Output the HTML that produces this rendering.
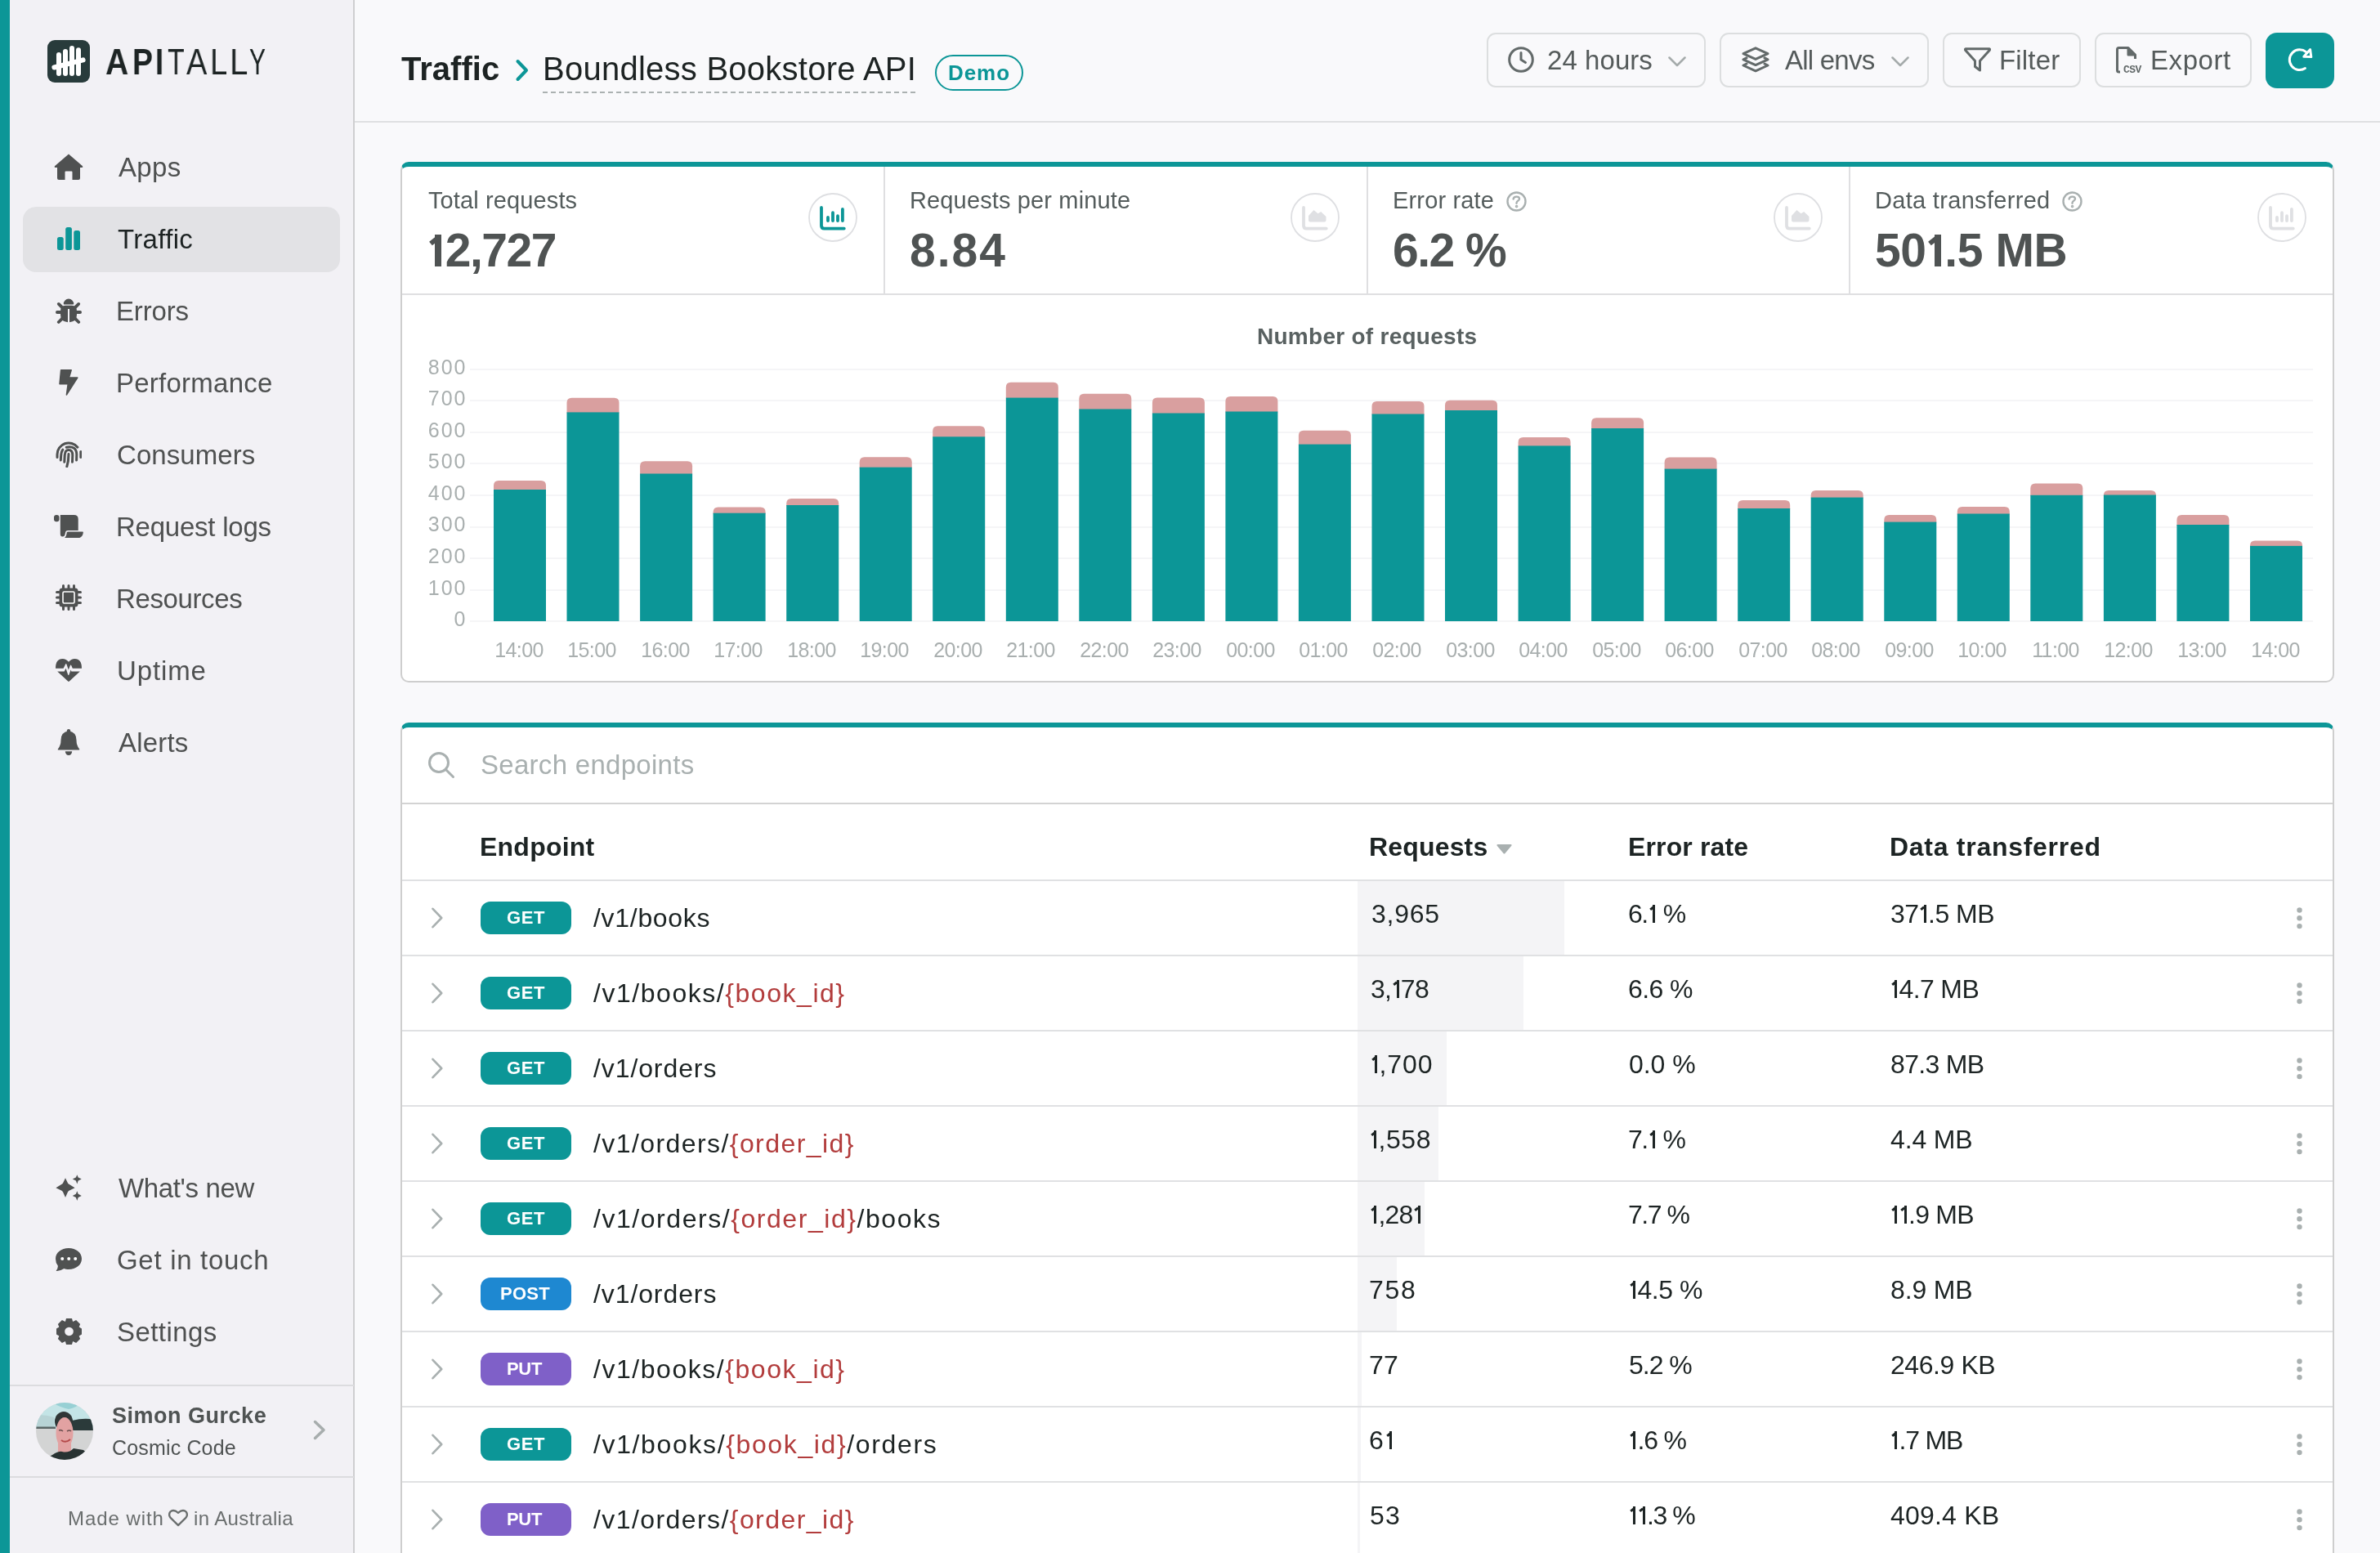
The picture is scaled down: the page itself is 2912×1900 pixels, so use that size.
<!DOCTYPE html>
<html><head><meta charset="utf-8">
<style>
*{box-sizing:border-box;margin:0;padding:0}
html,body{width:2912px;height:1900px;overflow:hidden;background:#f9f9fb;font-family:"Liberation Sans",sans-serif;color:#212626;-webkit-font-smoothing:antialiased}
.a{position:absolute}
.t{position:absolute;white-space:pre;line-height:1;will-change:transform}
#lbar{left:0;top:0;width:12px;height:1900px;background:#0c9697}
#side{left:12px;top:0;width:422px;height:1900px;background:#f2f1f5;border-right:2px solid #cfcfd1}
#hdrline{left:434px;top:148px;width:2478px;height:2px;background:#dfe0e2}
.card{position:absolute;background:#fff;border:2px solid #cecece;border-top:6px solid #0c9697;border-radius:10px}
.one{display:inline-block;position:relative;width:.36em;height:.688em;overflow:hidden;vertical-align:baseline}
.one i{color:transparent;font-style:normal}
.one::before{content:"";position:absolute;right:.07em;top:0;bottom:0;width:.095em;background:currentColor}
.one::after{content:"";position:absolute;right:.13em;top:.035em;width:.17em;height:.09em;background:currentColor;transform:rotate(-38deg);transform-origin:100% 50%}
.b .one{width:.4em}
.b .one::before{width:.14em;right:.08em}
.b .one::after{width:.17em;height:.11em;right:.18em;top:.03em}
</style></head>
<body>
<div id="lbar" class="a"></div>
<div id="side" class="a"></div>
<div id="hdrline" class="a"></div>

<!-- SIDEBAR -->
<svg class="a" style="left:58px;top:49px" width="52" height="52" viewBox="0 0 52 52">
<rect width="52" height="52" rx="9" fill="#283b3b"/>
<g stroke="#fff" stroke-width="6" stroke-linecap="round">
<line x1="14" y1="18" x2="14" y2="41"/><line x1="22" y1="14" x2="22" y2="41"/><line x1="30" y1="10" x2="30" y2="41"/><line x1="38" y1="12.3" x2="38" y2="41"/>
<line x1="8.4" y1="33.5" x2="43.6" y2="24.4"/></g></svg>
<div class="t" style="left:128.5px;top:54px;font-size:44px;font-weight:700;color:#1d2424;transform-origin:0 0;transform:scaleX(0.887)">A</div>
<div class="t" style="left:161.6px;top:54px;font-size:44px;font-weight:700;color:#1d2424;transform-origin:0 0;transform:scaleX(0.848)">P</div>
<div class="t" style="left:190.4px;top:54px;font-size:44px;font-weight:700;color:#1d2424;transform-origin:0 0;transform:scaleX(0.829)">I</div>
<div class="t" style="left:205.2px;top:54px;font-size:44px;font-weight:400;color:#1d2424;transform-origin:0 0;transform:scaleX(0.772)">T</div>
<div class="t" style="left:227.5px;top:54px;font-size:44px;font-weight:400;color:#1d2424;transform-origin:0 0;transform:scaleX(0.864)">A</div>
<div class="t" style="left:256.5px;top:54px;font-size:44px;font-weight:400;color:#1d2424;transform-origin:0 0;transform:scaleX(0.868)">L</div>
<div class="t" style="left:280.7px;top:54px;font-size:44px;font-weight:400;color:#1d2424;transform-origin:0 0;transform:scaleX(0.916)">L</div>
<div class="t" style="left:305.3px;top:54px;font-size:44px;font-weight:400;color:#1d2424;transform-origin:0 0;transform:scaleX(0.681)">Y</div>

<div class="a" style="left:28px;top:253px;width:388px;height:80px;border-radius:16px;background:#e2e2e5"></div>

<!-- icons -->
<svg class="a" style="left:66px;top:188px" width="36" height="32" viewBox="0 0 36 32" fill="#4f5151">
<path d="M18 0.5 L34.8 15 Q36.2 17 34 17 L2 17 Q-0.2 17 1.2 15 Z"/>
<path d="M4 15 H32 V30 Q32 32 30 32 H22.5 V22.5 Q22.5 21.5 21.5 21.5 H14.5 Q13.5 21.5 13.5 22.5 V32 H6 Q4 32 4 30 Z"/></svg>
<svg class="a" style="left:70px;top:278px" width="28" height="28" viewBox="0 0 28 28" fill="#0c9697">
<rect x="0" y="12" width="7.7" height="16" rx="2.5"/><rect x="10.2" y="0" width="7.7" height="28" rx="2.5"/><rect x="20.3" y="4" width="7.7" height="24" rx="2.5"/></svg>
<svg class="a" style="left:68px;top:364px" width="32" height="32" viewBox="0 0 32 32">
<g fill="#4f5151"><path d="M9.8 7.8 A6.2 6.2 0 0 1 22.2 7.8 Q22.2 8.4 21.6 8.4 H10.4 Q9.8 8.4 9.8 7.8Z"/>
<path d="M6 17 Q6 10 12 9.8 H20 Q26 10 26 17 V21 Q26 29.5 17 30.2 V14 H15 V30.2 Q6 29.5 6 21Z"/></g>
<g stroke="#4f5151" stroke-width="3.8" stroke-linecap="round">
<line x1="3.8" y1="7.9" x2="9" y2="13.2"/><line x1="28.2" y1="7.9" x2="23" y2="13.2"/>
<line x1="1.9" y1="18" x2="6.5" y2="18"/><line x1="30.1" y1="18" x2="25.5" y2="18"/>
<line x1="3.8" y1="30" x2="9" y2="24.8"/><line x1="28.2" y1="30" x2="23" y2="24.8"/></g></svg>
<svg class="a" style="left:72px;top:452px" width="24" height="32" viewBox="0 0 24 32" fill="#4f5151" stroke="#4f5151" stroke-width="1.5" stroke-linejoin="round">
<path d="M2.6 0.8 H15.2 L12.4 10 H22.8 L9.4 31 L11.2 17.8 H1 Z"/></svg>
<svg class="a" style="left:68px;top:540px" width="32" height="32" viewBox="0 0 32 32" fill="none" stroke="#4f5151" stroke-width="3" stroke-linecap="round">
<path d="M2 19.5 V16 A14 14 0 0 1 26.9 7.2"/><path d="M30.8 12.5 V19.5"/>
<path d="M6.3 23 L6.6 18 Q7 12.5 8.8 10.2"/><path d="M13.2 7.2 Q25.5 5 25.8 16 L25.6 23"/>
<path d="M10.8 25.2 L11.2 17 Q11.5 10.5 16 10.5 Q20.8 10.5 20.8 17 L20.5 25.2"/><path d="M16 15.5 L15.4 24 L13.8 30.8"/></svg>
<svg class="a" style="left:66px;top:630px" width="36" height="28" viewBox="0 0 36 28" fill="#4f5151">
<rect x="0" y="0" width="6.5" height="8.2" rx="3"/>
<path d="M7.8 0 H24.5 Q29.7 0 29.7 5 V19 H17 Q14.3 19 13.9 22 Q13.6 26.5 10.4 26.5 Q7.8 26.5 7.8 23 Z"/>
<path d="M15.8 21 Q16.2 20.5 17.5 20.5 H35.2 Q36 20.7 35.8 21.8 Q35 28.4 28.5 28.4 H12.5 Q15.4 26.5 15.8 21 Z"/></svg>
<svg class="a" style="left:68px;top:715px" width="32" height="32" viewBox="0 0 32 32" fill="#4f5151">
<rect x="4.5" y="4.5" width="23" height="23" rx="3.5"/>
<g stroke="#4f5151" stroke-width="3" stroke-linecap="round"><path d="M9.5 1.5V5 M16 1.5V5 M22.5 1.5V5 M9.5 27V30.5 M16 27V30.5 M22.5 27V30.5 M1.5 9.5H5 M1.5 16H5 M1.5 22.5H5 M27 9.5H30.5 M27 16H30.5 M27 22.5H30.5"/></g>
<rect x="9" y="9" width="14" height="14" rx="1.5" fill="none" stroke="#fff" stroke-width="1.6"/></svg>
<svg class="a" style="left:68px;top:806px" width="32" height="28" viewBox="0 0 32 28" fill="#4f5151">
<path d="M0 11.8 Q0 0 8.5 0 Q13 0 16 3.8 Q19 0 23.5 0 Q32 0 32 11.8 H20.8 L19.2 8 Q18.6 7 18 8 L15.8 13.6 L13.4 6.6 Q12.8 5.6 12.2 6.6 L9.6 11.8 Z"/>
<path d="M2.2 15.5 H10.6 L12.6 11.8 L15.2 19.6 Q15.8 20.6 16.4 19.6 L18.6 13.5 L19.4 15.5 H29.8 L16.8 27.6 Q16 28.3 15.2 27.6 Z"/></svg>
<svg class="a" style="left:70px;top:892px" width="28" height="32" viewBox="0 0 28 32" fill="#4f5151">
<circle cx="14" cy="2.2" r="2.2"/>
<path d="M14 2.5 Q4.5 3.5 4.5 13.5 Q4.5 20 1 24.2 Q0 25.6 1.6 25.6 H26.4 Q28 25.6 27 24.2 Q23.5 20 23.5 13.5 Q23.5 3.5 14 2.5 Z"/>
<path d="M9.8 27.2 H18.2 Q17.8 32 14 32 Q10.2 32 9.8 27.2 Z"/></svg>
<svg class="a" style="left:68px;top:1437px" width="32" height="32" viewBox="0 0 32 32" fill="#4f5151">
<path d="M12 4.2 L15 10.5 Q15.5 11.4 16.4 11.8 L23.6 16.2 L16.4 19.8 Q15.5 20.4 15 21.2 L12 28 L9 21.2 Q8.5 20.4 7.6 19.8 L0.4 16.2 L7.6 11.8 Q8.5 11.4 9 10.5 Z"/>
<path d="M26.3 0.2 L27.7 3.6 L31.8 5.6 L27.7 7.6 L26.3 11.6 L24.9 7.6 L20.8 5.6 L24.9 3.6 Z"/>
<path d="M26.3 20.2 L27.7 23.8 L31.8 26 L27.7 28 L26.3 32 L24.9 28 L20.8 26 L24.9 23.8 Z"/></svg>
<svg class="a" style="left:68px;top:1527px" width="32" height="28" viewBox="0 0 32 28">
<path fill="#4f5151" d="M16 0 C25 0 32 5.5 32 13 C32 20.5 25 26 16 26 C13.8 26 12 25.6 10.4 25 Q5.5 28.2 0.6 28 Q3.2 24.6 2.8 21.4 Q0 18 0 13 C0 5.5 7 0 16 0Z"/>
<g fill="#fff"><circle cx="8.2" cy="13" r="2"/><circle cx="16.2" cy="13" r="2"/><circle cx="24.2" cy="13" r="2"/></g></svg>
<svg class="a" style="left:68.5px;top:1613px" width="31" height="32" viewBox="-15.5 -16 31 32">
<path fill="#4f5151" fill-rule="evenodd" d="M-3.5 -16 H3.5 L4.6 -12 L8.6 -14 L13.6 -9 L12.2 -5.6 L15.5 -3.5 V3.5 L12.2 5.6 L13.6 9 L8.6 14 L4.6 12 L3.5 16 H-3.5 L-4.6 12 L-8.6 14 L-13.6 9 L-12.2 5.6 L-15.5 3.5 V-3.5 L-12.2 -5.6 L-13.6 -9 L-8.6 -14 L-4.6 -12 Z M0 -5.3 A5.3 5.3 0 1 0 0.01 -5.3 Z"/></svg>

<div class="t" id="nv0" style="left:145.0px;top:188.2px;font-size:33px;color:#4f5151;letter-spacing:0.33px">Apps</div>
<div class="t" id="nv1" style="left:144.0px;top:275.8px;font-size:33px;color:#1d2323;letter-spacing:0.33px">Traffic</div>
<div class="t" id="nv2" style="left:142.0px;top:363.9px;font-size:33px;color:#4f5151;letter-spacing:-0.16px">Errors</div>
<div class="t" id="nv3" style="left:142.0px;top:452.0px;font-size:33px;color:#4f5151;letter-spacing:0.25px">Performance</div>
<div class="t" id="nv4" style="left:143.0px;top:540.1px;font-size:33px;color:#4f5151;letter-spacing:0.06px">Consumers</div>
<div class="t" id="nv5" style="left:142.0px;top:628.1px;font-size:33px;color:#4f5151;letter-spacing:-0.23px">Request logs</div>
<div class="t" id="nv6" style="left:142.0px;top:716.2px;font-size:33px;color:#4f5151;letter-spacing:-0.38px">Resources</div>
<div class="t" id="nv7" style="left:143.0px;top:804.2px;font-size:33px;color:#4f5151;letter-spacing:0.88px">Uptime</div>
<div class="t" id="nv8" style="left:145.0px;top:892.3px;font-size:33px;color:#4f5151;letter-spacing:0.2px">Alerts</div>
<div class="t" id="nv9" style="left:145.0px;top:1437.0px;font-size:33px;color:#4f5151;letter-spacing:-0.36px">What's new</div>
<div class="t" id="nv10" style="left:143.0px;top:1525.0px;font-size:33px;color:#4f5151;letter-spacing:0.7px">Get in touch</div>
<div class="t" id="nv11" style="left:143.0px;top:1613.1px;font-size:33px;color:#4f5151;letter-spacing:0.43px">Settings</div>

<div class="a" style="left:12px;top:1694px;width:421px;height:2px;background:#dcdcdf"></div>
<div class="a" style="left:12px;top:1806px;width:421px;height:2px;background:#dcdcdf"></div>
<svg class="a" style="left:44px;top:1716px" width="70" height="70" viewBox="0 0 70 70">
<defs><clipPath id="av"><circle cx="35" cy="35" r="35"/></clipPath></defs>
<g clip-path="url(#av)">
<rect width="70" height="70" fill="#d3d4d4"/>
<rect width="70" height="32" fill="#c3e4e6"/>
<path d="M20 0 H55 Q50 6 40 8 Q30 6 20 0Z" fill="#97d0d4"/>
<path d="M0 16 Q10 14 22 18 V30 H0Z" fill="#b7d3d5"/>
<rect x="0" y="29.5" width="24" height="2.5" fill="#5a6565"/>
<path d="M44 22 Q56 19 66 20 L70 22 V34 H44Z" fill="#2b3a3a"/>
<ellipse cx="34" cy="23" rx="11" ry="12" fill="#2f3636"/>
<rect x="27" y="46" width="16" height="16" fill="#e2a2a2"/>
<ellipse cx="35" cy="37" rx="10.5" ry="19" fill="#e2a2a2"/>
<path d="M28 34 Q31 33 33 35 M38 35 Q41 33 43 35" stroke="#6c5050" stroke-width="1.6" fill="none"/>
<path d="M31 46 Q36 50 42 45" stroke="#b44a4a" stroke-width="2" fill="none"/>
<path d="M10 70 L20 64 Q28 59 32 60 Q40 62 46 56 L58 58 Q66 64 70 70Z" fill="#283232"/>
</g></svg>
<div class="t" id="sg" style="left:137.4px;top:1718.7px;font-size:27px;font-weight:700;color:#4f5353;letter-spacing:0.51px">Simon Gurcke</div>
<div class="t" id="cc" style="left:137.4px;top:1758.7px;font-size:25px;color:#4f5353;letter-spacing:0.16px">Cosmic Code</div>
<svg class="a" style="left:383px;top:1737px" width="16" height="25" viewBox="0 0 16 25" fill="none" stroke="#a7adad" stroke-width="3.5" stroke-linecap="round" stroke-linejoin="round"><path d="M2.5 2.5 L13 12.5 L2.5 22.5"/></svg>
<div class="t" id="mw1" style="left:82.9px;top:1845.5px;font-size:24px;color:#6a6e6e;letter-spacing:0.94px">Made with</div>
<div class="t" id="mw2" style="left:237.4px;top:1845.5px;font-size:24px;color:#6a6e6e;letter-spacing:0.39px">in Australia</div>
<svg class="a" style="left:206px;top:1846px" width="24" height="22" viewBox="0 0 25 22" fill="none" stroke="#6a6e6e" stroke-width="2.4" stroke-linejoin="round"><path d="M12.5 20.5 L3 11.2 Q-0.5 7.2 2.5 3.2 Q6.5 -0.5 12.5 4.5 Q18.5 -0.5 22.5 3.2 Q25.5 7.2 22 11.2 Z"/></svg>

<!-- HEADER -->
<div class="t" id="h_traffic" style="left:491.1px;top:63.8px;font-size:40px;font-weight:700;color:#1d2323;letter-spacing:0.02px">Traffic</div>
<svg class="a" style="left:630px;top:72px" width="18" height="28" viewBox="0 0 18 28" fill="none" stroke="#0c9697" stroke-width="4" stroke-linecap="round" stroke-linejoin="round"><path d="M3.5 3 L14 14 L3.5 25"/></svg>
<div class="t" id="h_app" style="left:663.6px;top:63.8px;font-size:40px;color:#1d2323;letter-spacing:0.25px">Boundless Bookstore API</div>
<div class="a" style="left:664px;top:112px;width:456px;height:2px;background:repeating-linear-gradient(90deg,#abb1b1 0 6px,transparent 6px 10px)"></div>
<div class="a" style="left:1144px;top:67px;width:108px;height:44px;border:2px solid #0c9697;border-radius:22px"></div>
<div class="t" id="h_demo" style="left:1160.0px;top:75.7px;font-size:26px;font-weight:700;color:#0c9697;letter-spacing:0.93px">Demo</div>

<div class="a" style="left:1819px;top:40px;width:268px;height:67px;border:2px solid #dcdedf;border-radius:11px"></div>
<div class="a" style="left:2104px;top:40px;width:256px;height:67px;border:2px solid #dcdedf;border-radius:11px"></div>
<div class="a" style="left:2377px;top:40px;width:169px;height:67px;border:2px solid #dcdedf;border-radius:11px"></div>
<div class="a" style="left:2563px;top:40px;width:192px;height:67px;border:2px solid #dcdedf;border-radius:11px"></div>
<div class="a" style="left:2772px;top:40px;width:84px;height:68px;background:#0c9697;border-radius:14px"></div>
<svg class="a" style="left:1845px;top:57px" width="32" height="32" viewBox="0 0 32 32" fill="none" stroke="#636a6a" stroke-width="3" stroke-linecap="round"><circle cx="16" cy="16" r="14.3"/><path d="M16 7.5 V16 L21.5 19.5"/></svg>
<div class="t" id="b_24" style="left:1892.7px;top:57.0px;font-size:33px;color:#555b5b;letter-spacing:0.06px">24 hours</div>
<svg class="a" style="left:2041px;top:69px" width="22" height="13" viewBox="0 0 22 13" fill="none" stroke="#a5abab" stroke-width="2.5" stroke-linecap="round" stroke-linejoin="round"><path d="M1.5 1.5 L11 11 L20.5 1.5"/></svg>
<svg class="a" style="left:2131px;top:57px" width="34" height="32" viewBox="0 0 34 32" fill="none" stroke="#636a6a" stroke-width="3" stroke-linejoin="round" stroke-linecap="round"><path d="M17 1.8 L32 8.6 L17 15.4 L2 8.6 Z"/><path d="M6 13.8 L2 15.8 L17 22.6 L32 15.8 L28 13.8"/><path d="M6 21 L2 23 L17 29.8 L32 23 L28 21"/></svg>
<div class="t" id="b_env" style="left:2183.7px;top:57.0px;font-size:33px;color:#555b5b;letter-spacing:-0.77px">All envs</div>
<svg class="a" style="left:2314px;top:69px" width="22" height="13" viewBox="0 0 22 13" fill="none" stroke="#a5abab" stroke-width="2.5" stroke-linecap="round" stroke-linejoin="round"><path d="M1.5 1.5 L11 11 L20.5 1.5"/></svg>
<svg class="a" style="left:2403px;top:58px" width="33" height="30" viewBox="0 0 33 30" fill="none" stroke="#636a6a" stroke-width="3" stroke-linejoin="round" stroke-linecap="round"><path d="M1.8 1.8 H31.2 Q32 2.5 31 3.8 L19.5 16.5 V28 L13.5 23.5 V16.5 L2 3.8 Q1 2.5 1.8 1.8 Z"/></svg>
<div class="t" id="b_filter" style="left:2445.9px;top:57.0px;font-size:33px;color:#555b5b;letter-spacing:0.18px">Filter</div>
<svg class="a" style="left:2589px;top:57px;will-change:transform" width="33" height="33" viewBox="0 0 33 33" fill="none" stroke="#636a6a" stroke-width="3" stroke-linejoin="round"><path d="M5 31 H3.5 Q1.5 31 1.5 29 V3.5 Q1.5 1.5 3.5 1.5 H15 L23.5 10 V15"/><path d="M15 1.5 V10 H23.5" fill="#636a6a"/>
<text x="9" y="32" font-family="Liberation Mono" font-size="13" font-weight="700" fill="#636a6a" stroke="none" letter-spacing="-0.5">CSV</text></svg>
<div class="t" id="b_export" style="left:2631.4px;top:57.1px;font-size:33px;color:#555b5b;letter-spacing:0.56px">Export</div>
<svg class="a" style="left:2799px;top:58px" width="32" height="31" viewBox="0 0 32 31" fill="none" stroke="#fff" stroke-width="3" stroke-linecap="round" stroke-linejoin="round"><path d="M21.4 25.6 A12.4 12.4 0 1 1 22.6 5.6"/><path d="M27.6 2.6 L28.8 11.6 L19.8 11.2 Z"/></svg>

<!-- stats + chart card -->
<div class="card" style="left:490px;top:198px;width:2366px;height:637px"></div>
<div class="a" style="left:492px;top:359px;width:2362px;height:2px;background:#dfdfe1"></div>
<div class="a" style="left:1081px;top:204px;width:2px;height:155px;background:#dfdfe1"></div>
<div class="a" style="left:1672px;top:204px;width:2px;height:155px;background:#dfdfe1"></div>
<div class="a" style="left:2262px;top:204px;width:2px;height:155px;background:#dfdfe1"></div>

<div class="t" id="s_l1" style="left:524.0px;top:230.5px;font-size:29px;color:#545c5c;letter-spacing:0.12px">Total requests</div>
<div class="t" id="s_l2" style="left:1112.5px;top:230.5px;font-size:29px;color:#545c5c;letter-spacing:0.14px">Requests per minute</div>
<div class="t" id="s_l3" style="left:1703.9px;top:230.5px;font-size:29px;color:#545c5c;letter-spacing:0.16px">Error rate</div>
<div class="t" id="s_l4" style="left:2294.3px;top:230.5px;font-size:29px;color:#545c5c;letter-spacing:0.31px">Data transferred</div>
<div class="t b" id="s_v1" style="left:522.0px;top:278.3px;font-size:57px;font-weight:700;color:#4f5353;letter-spacing:-1.5px"><span class="one"><i>1</i></span>2,727</div>
<div class="t b" id="s_v2" style="left:1112.5px;top:278.3px;font-size:57px;font-weight:700;color:#4f5353;letter-spacing:1.97px">8.84</div>
<div class="t b" id="s_v3" style="left:1704.0px;top:278.3px;font-size:57px;font-weight:700;color:#4f5353;letter-spacing:-1.5px">6.2 %</div>
<div class="t b" id="s_v4" style="left:2294.0px;top:278.3px;font-size:57px;font-weight:700;color:#4f5353;letter-spacing:-0.43px">50<span class="one"><i>1</i></span>.5 MB</div>

<svg class="a" style="left:1843px;top:234px" width="25" height="25" viewBox="0 0 25 25" fill="none" stroke="#a9b0b0" stroke-width="2.4" stroke-linecap="round"><circle cx="12.5" cy="12.5" r="11"/><path d="M8.6 9.5 Q9 6.6 12.5 6.6 Q16 6.6 16 9.2 Q16 10.8 13.6 12.3 Q12.5 13 12.5 14.8"/><circle cx="12.6" cy="18.6" r="0.6" fill="#a9b0b0"/></svg>
<svg class="a" style="left:2523px;top:234px" width="25" height="25" viewBox="0 0 25 25" fill="none" stroke="#a9b0b0" stroke-width="2.4" stroke-linecap="round"><circle cx="12.5" cy="12.5" r="11"/><path d="M8.6 9.5 Q9 6.6 12.5 6.6 Q16 6.6 16 9.2 Q16 10.8 13.6 12.3 Q12.5 13 12.5 14.8"/><circle cx="12.6" cy="18.6" r="0.6" fill="#a9b0b0"/></svg>

<svg class="a" style="left:989px;top:236px" width="60" height="60" viewBox="0 0 60 60" fill="none" stroke-linecap="round">
<circle cx="30" cy="30" r="29" stroke="#dedfe2" stroke-width="1.8"/>
<path d="M16 18 V40 Q16 43.6 19.5 43.6 H43.8" stroke="#0c9697" stroke-width="3.8"/>
<path d="M24 30 V34 M30 24.2 V34 M36 28.2 V34 M41.9 20 V34" stroke="#0c9697" stroke-width="3.8"/></svg>
<svg class="a" style="left:1579px;top:236px" width="60" height="60" viewBox="0 0 60 60" fill="none" stroke-linecap="round">
<circle cx="30" cy="30" r="29" stroke="#dedfe2" stroke-width="1.8"/>
<path d="M16 18 V40 Q16 43.6 19.5 43.6 H43.8" stroke="#dfe0e3" stroke-width="3.8"/>
<path d="M22 28 L28.4 21 L33.6 25.3 L37.2 23 L43.5 29 V33.5 Q43.5 35.4 41.5 35.4 H24 Q22 35.4 22 33.5 Z" fill="#dfe0e3"/></svg>
<svg class="a" style="left:2170px;top:236px" width="60" height="60" viewBox="0 0 60 60" fill="none" stroke-linecap="round">
<circle cx="30" cy="30" r="29" stroke="#dedfe2" stroke-width="1.8"/>
<path d="M16 18 V40 Q16 43.6 19.5 43.6 H43.8" stroke="#dfe0e3" stroke-width="3.8"/>
<path d="M22 28 L28.4 21 L33.6 25.3 L37.2 23 L43.5 29 V33.5 Q43.5 35.4 41.5 35.4 H24 Q22 35.4 22 33.5 Z" fill="#dfe0e3"/></svg>
<svg class="a" style="left:2762px;top:236px" width="60" height="60" viewBox="0 0 60 60" fill="none" stroke-linecap="round">
<circle cx="30" cy="30" r="29" stroke="#dedfe2" stroke-width="1.8"/>
<path d="M16 18 V40 Q16 43.6 19.5 43.6 H43.8" stroke="#dfe0e3" stroke-width="3.8"/>
<path d="M24 30 V34 M30 24.2 V34 M36 28.2 V34 M41.9 20 V34" stroke="#dfe0e3" stroke-width="3.8"/></svg>
<!-- CHART -->
<div class="a" style="left:575px;top:759.1px;width:2255px;height:2px;background:#f5f5f7"></div>
<div class="a" style="left:575px;top:720.6px;width:2255px;height:2px;background:#f5f5f7"></div>
<div class="a" style="left:575px;top:682.0px;width:2255px;height:2px;background:#f5f5f7"></div>
<div class="a" style="left:575px;top:643.5px;width:2255px;height:2px;background:#f5f5f7"></div>
<div class="a" style="left:575px;top:604.9px;width:2255px;height:2px;background:#f5f5f7"></div>
<div class="a" style="left:575px;top:566.4px;width:2255px;height:2px;background:#f5f5f7"></div>
<div class="a" style="left:575px;top:527.9px;width:2255px;height:2px;background:#f5f5f7"></div>
<div class="a" style="left:575px;top:489.3px;width:2255px;height:2px;background:#f5f5f7"></div>
<div class="a" style="left:575px;top:450.8px;width:2255px;height:2px;background:#f5f5f7"></div>
<div class="t" style="left:468px;width:103.5px;text-align:right;top:745.0px;font-size:25px;color:#a9afaf;letter-spacing:2px">0</div>
<div class="t" style="left:468px;width:103.5px;text-align:right;top:706.5px;font-size:25px;color:#a9afaf;letter-spacing:2px">100</div>
<div class="t" style="left:468px;width:103.5px;text-align:right;top:668.0px;font-size:25px;color:#a9afaf;letter-spacing:2px">200</div>
<div class="t" style="left:468px;width:103.5px;text-align:right;top:629.4px;font-size:25px;color:#a9afaf;letter-spacing:2px">300</div>
<div class="t" style="left:468px;width:103.5px;text-align:right;top:590.9px;font-size:25px;color:#a9afaf;letter-spacing:2px">400</div>
<div class="t" style="left:468px;width:103.5px;text-align:right;top:552.3px;font-size:25px;color:#a9afaf;letter-spacing:2px">500</div>
<div class="t" style="left:468px;width:103.5px;text-align:right;top:513.8px;font-size:25px;color:#a9afaf;letter-spacing:2px">600</div>
<div class="t" style="left:468px;width:103.5px;text-align:right;top:475.3px;font-size:25px;color:#a9afaf;letter-spacing:2px">700</div>
<div class="t" style="left:468px;width:103.5px;text-align:right;top:436.7px;font-size:25px;color:#a9afaf;letter-spacing:2px">800</div>
<svg class="a" style="left:590px;top:440px" width="2250" height="330" viewBox="590 440 2250 330">
<path fill="#d99f9f" d="M604.0 600.0 V594.1 Q604.0 588.1 610.0 588.1 H662.0 Q668.0 588.1 668.0 594.1 V600.0 Z"/>
<rect fill="#0c9697" x="604.0" y="599.0" width="64" height="161.0"/>
<path fill="#d99f9f" d="M693.5 505.4 V492.7 Q693.5 486.7 699.5 486.7 H751.5 Q757.5 486.7 757.5 492.7 V505.4 Z"/>
<rect fill="#0c9697" x="693.5" y="504.4" width="64" height="255.6"/>
<path fill="#d99f9f" d="M783.1 580.5 V570.3 Q783.1 564.3 789.1 564.3 H841.1 Q847.1 564.3 847.1 570.3 V580.5 Z"/>
<rect fill="#0c9697" x="783.1" y="579.5" width="64" height="180.5"/>
<path fill="#d99f9f" d="M872.6 628.7 V626.6 Q872.6 620.6 878.6 620.6 H930.6 Q936.6 620.6 936.6 626.6 V628.7 Z"/>
<rect fill="#0c9697" x="872.6" y="627.7" width="64" height="132.3"/>
<path fill="#d99f9f" d="M962.2 619.0 V616.0 Q962.2 610.0 968.2 610.0 H1020.2 Q1026.2 610.0 1026.2 616.0 V619.0 Z"/>
<rect fill="#0c9697" x="962.2" y="618.0" width="64" height="142.0"/>
<path fill="#d99f9f" d="M1051.7 572.7 V565.2 Q1051.7 559.2 1057.7 559.2 H1109.7 Q1115.7 559.2 1115.7 565.2 V572.7 Z"/>
<rect fill="#0c9697" x="1051.7" y="571.7" width="64" height="188.3"/>
<path fill="#d99f9f" d="M1141.2 535.3 V527.2 Q1141.2 521.2 1147.2 521.2 H1199.2 Q1205.2 521.2 1205.2 527.2 V535.3 Z"/>
<rect fill="#0c9697" x="1141.2" y="534.3" width="64" height="225.7"/>
<path fill="#d99f9f" d="M1230.8 487.6 V473.7 Q1230.8 467.7 1236.8 467.7 H1288.8 Q1294.8 467.7 1294.8 473.7 V487.6 Z"/>
<rect fill="#0c9697" x="1230.8" y="486.6" width="64" height="273.4"/>
<path fill="#d99f9f" d="M1320.3 501.5 V487.8 Q1320.3 481.8 1326.3 481.8 H1378.3 Q1384.3 481.8 1384.3 487.8 V501.5 Z"/>
<rect fill="#0c9697" x="1320.3" y="500.5" width="64" height="259.5"/>
<path fill="#d99f9f" d="M1409.9 506.5 V492.4 Q1409.9 486.4 1415.9 486.4 H1467.9 Q1473.9 486.4 1473.9 492.4 V506.5 Z"/>
<rect fill="#0c9697" x="1409.9" y="505.5" width="64" height="254.5"/>
<path fill="#d99f9f" d="M1499.4 504.5 V490.9 Q1499.4 484.9 1505.4 484.9 H1557.4 Q1563.4 484.9 1563.4 490.9 V504.5 Z"/>
<rect fill="#0c9697" x="1499.4" y="503.5" width="64" height="256.5"/>
<path fill="#d99f9f" d="M1588.9 544.6 V532.7 Q1588.9 526.7 1594.9 526.7 H1646.9 Q1652.9 526.7 1652.9 532.7 V544.6 Z"/>
<rect fill="#0c9697" x="1588.9" y="543.6" width="64" height="216.4"/>
<path fill="#d99f9f" d="M1678.5 507.5 V496.9 Q1678.5 490.9 1684.5 490.9 H1736.5 Q1742.5 490.9 1742.5 496.9 V507.5 Z"/>
<rect fill="#0c9697" x="1678.5" y="506.5" width="64" height="253.5"/>
<path fill="#d99f9f" d="M1768.0 503.0 V495.7 Q1768.0 489.7 1774.0 489.7 H1826.0 Q1832.0 489.7 1832.0 495.7 V503.0 Z"/>
<rect fill="#0c9697" x="1768.0" y="502.0" width="64" height="258.0"/>
<path fill="#d99f9f" d="M1857.6 546.4 V541.0 Q1857.6 535.0 1863.6 535.0 H1915.6 Q1921.6 535.0 1921.6 541.0 V546.4 Z"/>
<rect fill="#0c9697" x="1857.6" y="545.4" width="64" height="214.6"/>
<path fill="#d99f9f" d="M1947.1 525.0 V517.3 Q1947.1 511.3 1953.1 511.3 H2005.1 Q2011.1 511.3 2011.1 517.3 V525.0 Z"/>
<rect fill="#0c9697" x="1947.1" y="524.0" width="64" height="236.0"/>
<path fill="#d99f9f" d="M2036.6 574.6 V565.5 Q2036.6 559.5 2042.6 559.5 H2094.6 Q2100.6 559.5 2100.6 565.5 V574.6 Z"/>
<rect fill="#0c9697" x="2036.6" y="573.6" width="64" height="186.4"/>
<path fill="#d99f9f" d="M2126.2 623.0 V617.9 Q2126.2 611.9 2132.2 611.9 H2184.2 Q2190.2 611.9 2190.2 617.9 V623.0 Z"/>
<rect fill="#0c9697" x="2126.2" y="622.0" width="64" height="138.0"/>
<path fill="#d99f9f" d="M2215.7 609.6 V606.1 Q2215.7 600.1 2221.7 600.1 H2273.7 Q2279.7 600.1 2279.7 606.1 V609.6 Z"/>
<rect fill="#0c9697" x="2215.7" y="608.6" width="64" height="151.4"/>
<path fill="#d99f9f" d="M2305.3 639.6 V636.0 Q2305.3 630.0 2311.3 630.0 H2363.3 Q2369.3 630.0 2369.3 636.0 V639.6 Z"/>
<rect fill="#0c9697" x="2305.3" y="638.6" width="64" height="121.4"/>
<path fill="#d99f9f" d="M2394.8 629.5 V626.0 Q2394.8 620.0 2400.8 620.0 H2452.8 Q2458.8 620.0 2458.8 626.0 V629.5 Z"/>
<rect fill="#0c9697" x="2394.8" y="628.5" width="64" height="131.5"/>
<path fill="#d99f9f" d="M2484.3 606.8 V597.6 Q2484.3 591.6 2490.3 591.6 H2542.3 Q2548.3 591.6 2548.3 597.6 V606.8 Z"/>
<rect fill="#0c9697" x="2484.3" y="605.8" width="64" height="154.2"/>
<path fill="#d99f9f" d="M2573.9 606.5 V606.1 Q2573.9 600.1 2579.9 600.1 H2631.9 Q2637.9 600.1 2637.9 606.1 V606.5 Z"/>
<rect fill="#0c9697" x="2573.9" y="605.5" width="64" height="154.5"/>
<path fill="#d99f9f" d="M2663.4 643.0 V636.0 Q2663.4 630.0 2669.4 630.0 H2721.4 Q2727.4 630.0 2727.4 636.0 V643.0 Z"/>
<rect fill="#0c9697" x="2663.4" y="642.0" width="64" height="118.0"/>
<path fill="#d99f9f" d="M2753.0 668.9 V667.6 Q2753.0 661.6 2759.0 661.6 H2811.0 Q2817.0 661.6 2817.0 667.6 V668.9 Z"/>
<rect fill="#0c9697" x="2753.0" y="667.9" width="64" height="92.1"/>
</svg>
<div class="t" style="left:574.5px;width:120px;text-align:center;top:783.0px;font-size:25px;color:#a9afaf;letter-spacing:-0.6px">14:00</div>
<div class="t" style="left:664.0px;width:120px;text-align:center;top:783.0px;font-size:25px;color:#a9afaf;letter-spacing:-0.6px">15:00</div>
<div class="t" style="left:753.6px;width:120px;text-align:center;top:783.0px;font-size:25px;color:#a9afaf;letter-spacing:-0.6px">16:00</div>
<div class="t" style="left:843.1px;width:120px;text-align:center;top:783.0px;font-size:25px;color:#a9afaf;letter-spacing:-0.6px">17:00</div>
<div class="t" style="left:932.7px;width:120px;text-align:center;top:783.0px;font-size:25px;color:#a9afaf;letter-spacing:-0.6px">18:00</div>
<div class="t" style="left:1022.2px;width:120px;text-align:center;top:783.0px;font-size:25px;color:#a9afaf;letter-spacing:-0.6px">19:00</div>
<div class="t" style="left:1111.7px;width:120px;text-align:center;top:783.0px;font-size:25px;color:#a9afaf;letter-spacing:-0.6px">20:00</div>
<div class="t" style="left:1201.3px;width:120px;text-align:center;top:783.0px;font-size:25px;color:#a9afaf;letter-spacing:-0.6px">21:00</div>
<div class="t" style="left:1290.8px;width:120px;text-align:center;top:783.0px;font-size:25px;color:#a9afaf;letter-spacing:-0.6px">22:00</div>
<div class="t" style="left:1380.4px;width:120px;text-align:center;top:783.0px;font-size:25px;color:#a9afaf;letter-spacing:-0.6px">23:00</div>
<div class="t" style="left:1469.9px;width:120px;text-align:center;top:783.0px;font-size:25px;color:#a9afaf;letter-spacing:-0.6px">00:00</div>
<div class="t" style="left:1559.4px;width:120px;text-align:center;top:783.0px;font-size:25px;color:#a9afaf;letter-spacing:-0.6px">01:00</div>
<div class="t" style="left:1649.0px;width:120px;text-align:center;top:783.0px;font-size:25px;color:#a9afaf;letter-spacing:-0.6px">02:00</div>
<div class="t" style="left:1738.5px;width:120px;text-align:center;top:783.0px;font-size:25px;color:#a9afaf;letter-spacing:-0.6px">03:00</div>
<div class="t" style="left:1828.1px;width:120px;text-align:center;top:783.0px;font-size:25px;color:#a9afaf;letter-spacing:-0.6px">04:00</div>
<div class="t" style="left:1917.6px;width:120px;text-align:center;top:783.0px;font-size:25px;color:#a9afaf;letter-spacing:-0.6px">05:00</div>
<div class="t" style="left:2007.1px;width:120px;text-align:center;top:783.0px;font-size:25px;color:#a9afaf;letter-spacing:-0.6px">06:00</div>
<div class="t" style="left:2096.7px;width:120px;text-align:center;top:783.0px;font-size:25px;color:#a9afaf;letter-spacing:-0.6px">07:00</div>
<div class="t" style="left:2186.2px;width:120px;text-align:center;top:783.0px;font-size:25px;color:#a9afaf;letter-spacing:-0.6px">08:00</div>
<div class="t" style="left:2275.8px;width:120px;text-align:center;top:783.0px;font-size:25px;color:#a9afaf;letter-spacing:-0.6px">09:00</div>
<div class="t" style="left:2365.3px;width:120px;text-align:center;top:783.0px;font-size:25px;color:#a9afaf;letter-spacing:-0.6px">10:00</div>
<div class="t" style="left:2454.8px;width:120px;text-align:center;top:783.0px;font-size:25px;color:#a9afaf;letter-spacing:-0.6px">11:00</div>
<div class="t" style="left:2544.4px;width:120px;text-align:center;top:783.0px;font-size:25px;color:#a9afaf;letter-spacing:-0.6px">12:00</div>
<div class="t" style="left:2633.9px;width:120px;text-align:center;top:783.0px;font-size:25px;color:#a9afaf;letter-spacing:-0.6px">13:00</div>
<div class="t" style="left:2723.5px;width:120px;text-align:center;top:783.0px;font-size:25px;color:#a9afaf;letter-spacing:-0.6px">14:00</div>
<div class="t" id="c_title" style="left:1537.7px;top:397.8px;font-size:28px;font-weight:700;color:#596161;letter-spacing:0.27px">Number of requests</div>

<!-- table card -->
<div class="card" style="left:490px;top:884px;width:2366px;height:1100px"></div>

<!-- TABLE -->
<svg class="a" style="left:523px;top:919px" width="34" height="34" viewBox="0 0 34 34" fill="none" stroke="#a9b0b0" stroke-width="3" stroke-linecap="round"><circle cx="14" cy="14" r="11.5"/><path d="M22.5 22.5 L31.5 31.5"/></svg>
<div class="t" id="srch" style="left:587.5px;top:919.2px;font-size:33px;color:#a9b0b0;letter-spacing:0.29px">Search endpoints</div>
<div class="a" style="left:492px;top:982px;width:2362px;height:2px;background:#d3d3d3"></div>
<div class="t" id="th1" style="left:587.0px;top:1020.1px;font-size:32px;font-weight:700;color:#1d2424;letter-spacing:0.23px">Endpoint</div>
<div class="t" id="th2" style="left:1675.0px;top:1020.1px;font-size:32px;font-weight:700;color:#1d2424;letter-spacing:0.17px">Requests</div>
<div class="t" id="th3" style="left:1991.6px;top:1020.1px;font-size:32px;font-weight:700;color:#1d2424;letter-spacing:0.13px">Error rate</div>
<div class="t" id="th4" style="left:2311.6px;top:1020.1px;font-size:32px;font-weight:700;color:#1d2424;letter-spacing:0.72px">Data transferred</div>
<svg class="a" style="left:1830px;top:1032px" width="21" height="14" viewBox="0 0 21 14"><path d="M1.5 2.5 Q0.8 1 2.5 1 H18.5 Q20.2 1 19.5 2.5 L11.5 12 Q10.5 13.2 9.5 12 Z" fill="#a9b0b0"/></svg>
<div class="a" style="left:492px;top:1076px;width:2362px;height:2px;background:#e0e1e3"></div>
<div class="a" style="left:1661px;top:1078px;width:253.0px;height:90px;background:#f4f4f6"></div>
<div class="a" style="left:492px;top:1168px;width:2362px;height:2px;background:#e0e1e3"></div>
<svg class="a" style="left:527px;top:1110px" width="16" height="26" viewBox="0 0 16 26" fill="none" stroke="#a9b0b0" stroke-width="2.6" stroke-linecap="round" stroke-linejoin="round"><path d="M2.5 1.8 L13.2 13 L2.5 24.2"/></svg>
<div class="a" style="left:588px;top:1103px;width:111px;height:40px;border-radius:12px;background:#0c9697"></div>
<div class="t" id="bd0" style="left:620.0px;top:1111.7px;font-size:22px;font-weight:700;color:#fff;letter-spacing:0.6px">GET</div>
<div class="t" id="pa0" style="left:725.6px;top:1106.8px;font-size:32px;color:#1d2424;letter-spacing:0.7px">/v1/books</div>
<div class="t" id="c0r0" style="left:1677.5px;top:1101.6px;font-size:32px;color:#1d2424;letter-spacing:0.72px">3,965</div>
<div class="t" id="c1r0" style="left:1992.0px;top:1101.6px;font-size:32px;color:#1d2424;letter-spacing:-1.45px">6.<span class="one"><i>1</i></span> %</div>
<div class="t" id="c2r0" style="left:2313.0px;top:1101.6px;font-size:32px;color:#1d2424;letter-spacing:-0.53px">37<span class="one"><i>1</i></span>.5 MB</div>
<svg class="a" style="left:2809px;top:1109px" width="9" height="29" viewBox="0 0 9 29" fill="#a9b0b0"><circle cx="4.5" cy="4.5" r="3.2"/><circle cx="4.5" cy="14.3" r="3.2"/><circle cx="4.5" cy="24.1" r="3.2"/></svg>
<div class="a" style="left:1661px;top:1170px;width:202.8px;height:90px;background:#f4f4f6"></div>
<div class="a" style="left:492px;top:1260px;width:2362px;height:2px;background:#e0e1e3"></div>
<svg class="a" style="left:527px;top:1202px" width="16" height="26" viewBox="0 0 16 26" fill="none" stroke="#a9b0b0" stroke-width="2.6" stroke-linecap="round" stroke-linejoin="round"><path d="M2.5 1.8 L13.2 13 L2.5 24.2"/></svg>
<div class="a" style="left:588px;top:1195px;width:111px;height:40px;border-radius:12px;background:#0c9697"></div>
<div class="t" id="bd1" style="left:620.0px;top:1203.7px;font-size:22px;font-weight:700;color:#fff;letter-spacing:0.6px">GET</div>
<div class="t" id="pa1" style="left:725.6px;top:1198.8px;font-size:32px;color:#1d2424;letter-spacing:1.54px">/v1/books/<span style="color:#b23c3c">{book_id}</span></div>
<div class="t" id="c0r1" style="left:1676.5px;top:1193.6px;font-size:32px;color:#1d2424;letter-spacing:-0.68px">3,<span class="one"><i>1</i></span>78</div>
<div class="t" id="c1r1" style="left:1992.0px;top:1193.6px;font-size:32px;color:#1d2424;letter-spacing:-0.6px">6.6 %</div>
<div class="t" id="c2r1" style="left:2312.0px;top:1193.6px;font-size:32px;color:#1d2424;letter-spacing:-0.63px"><span class="one"><i>1</i></span>4.7 MB</div>
<svg class="a" style="left:2809px;top:1201px" width="9" height="29" viewBox="0 0 9 29" fill="#a9b0b0"><circle cx="4.5" cy="4.5" r="3.2"/><circle cx="4.5" cy="14.3" r="3.2"/><circle cx="4.5" cy="24.1" r="3.2"/></svg>
<div class="a" style="left:1661px;top:1262px;width:108.5px;height:90px;background:#f4f4f6"></div>
<div class="a" style="left:492px;top:1352px;width:2362px;height:2px;background:#e0e1e3"></div>
<svg class="a" style="left:527px;top:1294px" width="16" height="26" viewBox="0 0 16 26" fill="none" stroke="#a9b0b0" stroke-width="2.6" stroke-linecap="round" stroke-linejoin="round"><path d="M2.5 1.8 L13.2 13 L2.5 24.2"/></svg>
<div class="a" style="left:588px;top:1287px;width:111px;height:40px;border-radius:12px;background:#0c9697"></div>
<div class="t" id="bd2" style="left:620.0px;top:1295.7px;font-size:22px;font-weight:700;color:#fff;letter-spacing:0.6px">GET</div>
<div class="t" id="pa2" style="left:725.6px;top:1290.8px;font-size:32px;color:#1d2424;letter-spacing:0.9px">/v1/orders</div>
<div class="t" id="c0r2" style="left:1675.5px;top:1285.6px;font-size:32px;color:#1d2424;letter-spacing:0.88px"><span class="one"><i>1</i></span>,700</div>
<div class="t" id="c1r2" style="left:1993.0px;top:1285.6px;font-size:32px;color:#1d2424;letter-spacing:-0.05px">0.0 %</div>
<div class="t" id="c2r2" style="left:2313.0px;top:1285.6px;font-size:32px;color:#1d2424;letter-spacing:-0.67px">87.3 MB</div>
<svg class="a" style="left:2809px;top:1293px" width="9" height="29" viewBox="0 0 9 29" fill="#a9b0b0"><circle cx="4.5" cy="4.5" r="3.2"/><circle cx="4.5" cy="14.3" r="3.2"/><circle cx="4.5" cy="24.1" r="3.2"/></svg>
<div class="a" style="left:1661px;top:1354px;width:99.4px;height:90px;background:#f4f4f6"></div>
<div class="a" style="left:492px;top:1444px;width:2362px;height:2px;background:#e0e1e3"></div>
<svg class="a" style="left:527px;top:1386px" width="16" height="26" viewBox="0 0 16 26" fill="none" stroke="#a9b0b0" stroke-width="2.6" stroke-linecap="round" stroke-linejoin="round"><path d="M2.5 1.8 L13.2 13 L2.5 24.2"/></svg>
<div class="a" style="left:588px;top:1379px;width:111px;height:40px;border-radius:12px;background:#0c9697"></div>
<div class="t" id="bd3" style="left:620.0px;top:1387.7px;font-size:22px;font-weight:700;color:#fff;letter-spacing:0.6px">GET</div>
<div class="t" id="pa3" style="left:725.6px;top:1382.8px;font-size:32px;color:#1d2424;letter-spacing:1.42px">/v1/orders/<span style="color:#b23c3c">{order_id}</span></div>
<div class="t" id="c0r3" style="left:1675.0px;top:1377.6px;font-size:32px;color:#1d2424;letter-spacing:0.55px"><span class="one"><i>1</i></span>,558</div>
<div class="t" id="c1r3" style="left:1991.5px;top:1377.6px;font-size:32px;color:#1d2424;letter-spacing:-1.5px">7.<span class="one"><i>1</i></span> %</div>
<div class="t" id="c2r3" style="left:2313.0px;top:1377.6px;font-size:32px;color:#1d2424;letter-spacing:-0.14px">4.4 MB</div>
<svg class="a" style="left:2809px;top:1385px" width="9" height="29" viewBox="0 0 9 29" fill="#a9b0b0"><circle cx="4.5" cy="4.5" r="3.2"/><circle cx="4.5" cy="14.3" r="3.2"/><circle cx="4.5" cy="24.1" r="3.2"/></svg>
<div class="a" style="left:1661px;top:1446px;width:81.7px;height:90px;background:#f4f4f6"></div>
<div class="a" style="left:492px;top:1536px;width:2362px;height:2px;background:#e0e1e3"></div>
<svg class="a" style="left:527px;top:1478px" width="16" height="26" viewBox="0 0 16 26" fill="none" stroke="#a9b0b0" stroke-width="2.6" stroke-linecap="round" stroke-linejoin="round"><path d="M2.5 1.8 L13.2 13 L2.5 24.2"/></svg>
<div class="a" style="left:588px;top:1471px;width:111px;height:40px;border-radius:12px;background:#0c9697"></div>
<div class="t" id="bd4" style="left:620.0px;top:1479.7px;font-size:22px;font-weight:700;color:#fff;letter-spacing:0.6px">GET</div>
<div class="t" id="pa4" style="left:725.6px;top:1474.8px;font-size:32px;color:#1d2424;letter-spacing:1.55px">/v1/orders/<span style="color:#b23c3c">{order_id}</span>/books</div>
<div class="t" id="c0r4" style="left:1675.0px;top:1469.6px;font-size:32px;color:#1d2424;letter-spacing:-0.88px"><span class="one"><i>1</i></span>,28<span class="one"><i>1</i></span></div>
<div class="t" id="c1r4" style="left:1991.5px;top:1469.6px;font-size:32px;color:#1d2424;letter-spacing:-1.5px">7.7 %</div>
<div class="t" id="c2r4" style="left:2312.0px;top:1469.6px;font-size:32px;color:#1d2424;letter-spacing:-0.78px"><span class="one"><i>1</i></span><span class="one"><i>1</i></span>.9 MB</div>
<svg class="a" style="left:2809px;top:1477px" width="9" height="29" viewBox="0 0 9 29" fill="#a9b0b0"><circle cx="4.5" cy="4.5" r="3.2"/><circle cx="4.5" cy="14.3" r="3.2"/><circle cx="4.5" cy="24.1" r="3.2"/></svg>
<div class="a" style="left:1661px;top:1538px;width:48.4px;height:90px;background:#f4f4f6"></div>
<div class="a" style="left:492px;top:1628px;width:2362px;height:2px;background:#e0e1e3"></div>
<svg class="a" style="left:527px;top:1570px" width="16" height="26" viewBox="0 0 16 26" fill="none" stroke="#a9b0b0" stroke-width="2.6" stroke-linecap="round" stroke-linejoin="round"><path d="M2.5 1.8 L13.2 13 L2.5 24.2"/></svg>
<div class="a" style="left:588px;top:1563px;width:111px;height:40px;border-radius:12px;background:#1e88d1"></div>
<div class="t" id="bd5" style="left:611.9px;top:1571.7px;font-size:22px;font-weight:700;color:#fff;letter-spacing:0.27px">POST</div>
<div class="t" id="pa5" style="left:725.6px;top:1566.8px;font-size:32px;color:#1d2424;letter-spacing:0.9px">/v1/orders</div>
<div class="t" id="c0r5" style="left:1675.0px;top:1561.6px;font-size:32px;color:#1d2424;letter-spacing:1.75px">758</div>
<div class="t" id="c1r5" style="left:1991.5px;top:1561.6px;font-size:32px;color:#1d2424;letter-spacing:-0.46px"><span class="one"><i>1</i></span>4.5 %</div>
<div class="t" id="c2r5" style="left:2313.0px;top:1561.6px;font-size:32px;color:#1d2424;letter-spacing:-0.14px">8.9 MB</div>
<svg class="a" style="left:2809px;top:1569px" width="9" height="29" viewBox="0 0 9 29" fill="#a9b0b0"><circle cx="4.5" cy="4.5" r="3.2"/><circle cx="4.5" cy="14.3" r="3.2"/><circle cx="4.5" cy="24.1" r="3.2"/></svg>
<div class="a" style="left:1661px;top:1630px;width:4.9px;height:90px;background:#f4f4f6"></div>
<div class="a" style="left:492px;top:1720px;width:2362px;height:2px;background:#e0e1e3"></div>
<svg class="a" style="left:527px;top:1662px" width="16" height="26" viewBox="0 0 16 26" fill="none" stroke="#a9b0b0" stroke-width="2.6" stroke-linecap="round" stroke-linejoin="round"><path d="M2.5 1.8 L13.2 13 L2.5 24.2"/></svg>
<div class="a" style="left:588px;top:1655px;width:111px;height:40px;border-radius:12px;background:#7f60c8"></div>
<div class="t" id="bd6" style="left:620.4px;top:1663.7px;font-size:22px;font-weight:700;color:#fff;letter-spacing:-0.3px">PUT</div>
<div class="t" id="pa6" style="left:725.6px;top:1658.8px;font-size:32px;color:#1d2424;letter-spacing:1.54px">/v1/books/<span style="color:#b23c3c">{book_id}</span></div>
<div class="t" id="c0r6" style="left:1675.0px;top:1653.6px;font-size:32px;color:#1d2424;letter-spacing:0.1px">77</div>
<div class="t" id="c1r6" style="left:1992.5px;top:1653.6px;font-size:32px;color:#1d2424;letter-spacing:-1.03px">5.2 %</div>
<div class="t" id="c2r6" style="left:2313.0px;top:1653.6px;font-size:32px;color:#1d2424;letter-spacing:-0.43px">246.9 KB</div>
<svg class="a" style="left:2809px;top:1661px" width="9" height="29" viewBox="0 0 9 29" fill="#a9b0b0"><circle cx="4.5" cy="4.5" r="3.2"/><circle cx="4.5" cy="14.3" r="3.2"/><circle cx="4.5" cy="24.1" r="3.2"/></svg>
<div class="a" style="left:1661px;top:1722px;width:3.9px;height:90px;background:#f4f4f6"></div>
<div class="a" style="left:492px;top:1812px;width:2362px;height:2px;background:#e0e1e3"></div>
<svg class="a" style="left:527px;top:1754px" width="16" height="26" viewBox="0 0 16 26" fill="none" stroke="#a9b0b0" stroke-width="2.6" stroke-linecap="round" stroke-linejoin="round"><path d="M2.5 1.8 L13.2 13 L2.5 24.2"/></svg>
<div class="a" style="left:588px;top:1747px;width:111px;height:40px;border-radius:12px;background:#0c9697"></div>
<div class="t" id="bd7" style="left:620.0px;top:1755.7px;font-size:22px;font-weight:700;color:#fff;letter-spacing:0.6px">GET</div>
<div class="t" id="pa7" style="left:725.6px;top:1750.8px;font-size:32px;color:#1d2424;letter-spacing:1.63px">/v1/books/<span style="color:#b23c3c">{book_id}</span>/orders</div>
<div class="t" id="c0r7" style="left:1675.0px;top:1745.6px;font-size:32px;color:#1d2424;letter-spacing:1px">6<span class="one"><i>1</i></span></div>
<div class="t" id="c1r7" style="left:1991.5px;top:1745.6px;font-size:32px;color:#1d2424;letter-spacing:-1.18px"><span class="one"><i>1</i></span>.6 %</div>
<div class="t" id="c2r7" style="left:2312.0px;top:1745.6px;font-size:32px;color:#1d2424;letter-spacing:-1.2px"><span class="one"><i>1</i></span>.7 MB</div>
<svg class="a" style="left:2809px;top:1753px" width="9" height="29" viewBox="0 0 9 29" fill="#a9b0b0"><circle cx="4.5" cy="4.5" r="3.2"/><circle cx="4.5" cy="14.3" r="3.2"/><circle cx="4.5" cy="24.1" r="3.2"/></svg>
<div class="a" style="left:1661px;top:1814px;width:3.4px;height:90px;background:#f4f4f6"></div>
<div class="a" style="left:492px;top:1904px;width:2362px;height:2px;background:#e0e1e3"></div>
<svg class="a" style="left:527px;top:1846px" width="16" height="26" viewBox="0 0 16 26" fill="none" stroke="#a9b0b0" stroke-width="2.6" stroke-linecap="round" stroke-linejoin="round"><path d="M2.5 1.8 L13.2 13 L2.5 24.2"/></svg>
<div class="a" style="left:588px;top:1839px;width:111px;height:40px;border-radius:12px;background:#7f60c8"></div>
<div class="t" id="bd8" style="left:620.4px;top:1847.7px;font-size:22px;font-weight:700;color:#fff;letter-spacing:-0.3px">PUT</div>
<div class="t" id="pa8" style="left:725.6px;top:1842.8px;font-size:32px;color:#1d2424;letter-spacing:1.42px">/v1/orders/<span style="color:#b23c3c">{order_id}</span></div>
<div class="t" id="c0r8" style="left:1676.4px;top:1837.6px;font-size:32px;color:#1d2424;letter-spacing:1.2px">53</div>
<div class="t" id="c1r8" style="left:1991.5px;top:1837.6px;font-size:32px;color:#1d2424;letter-spacing:-1.42px"><span class="one"><i>1</i></span><span class="one"><i>1</i></span>.3 %</div>
<div class="t" id="c2r8" style="left:2313.0px;top:1837.6px;font-size:32px;color:#1d2424;letter-spacing:0.2px">409.4 KB</div>
<svg class="a" style="left:2809px;top:1845px" width="9" height="29" viewBox="0 0 9 29" fill="#a9b0b0"><circle cx="4.5" cy="4.5" r="3.2"/><circle cx="4.5" cy="14.3" r="3.2"/><circle cx="4.5" cy="24.1" r="3.2"/></svg>
</body></html>
